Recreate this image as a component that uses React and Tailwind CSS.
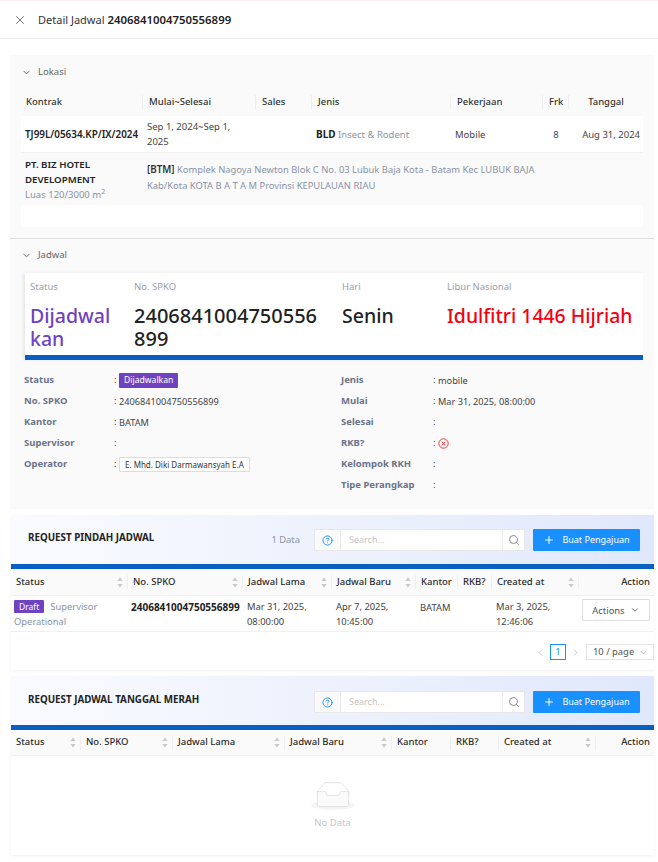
import { X, ChevronDown, ChevronLeft, ChevronRight, Search, Plus, CircleHelp } from "lucide-react";

const topCols = "grid-cols-[122px_113px_56px_139px_92px_26px_74px]";

const leftDetails = [
  { label: "Status", tag: "Dijadwalkan" },
  { label: "No. SPKO", value: "2406841004750556899" },
  { label: "Kantor", value: "BATAM" },
  { label: "Supervisor", value: "" },
  { label: "Operator", chip: "E. Mhd. Diki Darmawansyah E.A" },
];

const rightDetails = [
  { label: "Jenis", value: "mobile" },
  { label: "Mulai", value: "Mar 31, 2025, 08:00:00" },
  { label: "Selesai", value: "" },
  { label: "RKB?", rejected: true },
  { label: "Kelompok RKH", value: "" },
  { label: "Tipe Perangkap", value: "" },
];

const tableCols = [
  { label: "Status", sort: true },
  { label: "No. SPKO", sort: true },
  { label: "Jadwal Lama", sort: true },
  { label: "Jadwal Baru", sort: true },
  { label: "Kantor" },
  { label: "RKB?" },
  { label: "Created at", sort: true },
  { label: "Action", right: true },
];

function SortIcon() {
  return (
    <svg width="6" height="11" viewBox="0 0 6 11" className="shrink-0">
      <path d="M3 0.5 L5.6 4 H0.4 Z" fill="#c8c8c8" />
      <path d="M3 10.5 L5.6 7 H0.4 Z" fill="#c8c8c8" />
    </svg>
  );
}

function HeadRow({ cols, template, height }) {
  return (
    <div className={`grid ${template} ${height} items-center bg-[#fafafa] border-b border-[#f0f0f0] text-[9.5px] font-medium text-[#2b2b2b]`}>
      {cols.map((c, i) => (
        <div
          key={c.label}
          className={`flex items-center h-[14px] pl-[5px] pr-[4px] whitespace-nowrap ${i < cols.length - 1 ? "border-r border-[#efefef]" : ""} ${c.right ? "justify-end" : "justify-between"}`}
        >
          <span>{c.label}</span>
          {c.sort && <SortIcon />}
        </div>
      ))}
    </div>
  );
}

function CardHeader({ title, count, top }) {
  return (
    <>
      <div className={`flex h-[49px] items-start bg-gradient-to-r from-[#fafbff] to-[#e0e8fb] pr-[14px] pl-[17px] ${top}`}>
        <div className="whitespace-nowrap text-[9.8px] leading-[18px] font-bold text-[#222]">{title}</div>
        <div className="ml-auto flex items-center">
          {count && <span className="mr-[14px] text-[9.4px] text-[#8a94a6]">{count}</span>}
          <div className="flex h-[22px] w-[211px] border border-[#e8e8e8] bg-white">
            <div className="flex w-[26px] items-center justify-center border-r border-[#e8e8e8] bg-[#fafafa]">
              <CircleHelp size={11} className="text-[#1890ff]" />
            </div>
            <div className="flex-1 pl-[8px] text-[9px] leading-[20px] text-[#c4c4c4]">Search...</div>
            <div className="flex w-[22px] items-center justify-center border-l border-[#eeeeee]">
              <Search size={12} className="text-[#8c8c8c]" />
            </div>
          </div>
          <div className="ml-[8px] flex h-[22px] w-[107px] items-center justify-center gap-[7px] rounded-[1px] bg-[#1890ff] text-[9px] text-white">
            <Plus size={12} strokeWidth={2} />
            <span>Buat Pengajuan</span>
          </div>
        </div>
      </div>
      <div className="h-[5px] bg-[#0a60c2]" />
    </>
  );
}

function DetailRow({ item, labelWidth }) {
  return (
    <div className="flex h-[21px] items-center">
      <div className={`${labelWidth} shrink-0 text-[9.5px] font-bold text-[#6b7389]`}>{item.label}</div>
      <span className="w-[5px] shrink-0 text-[9.5px] text-[#444]">:</span>
      {item.tag && (
        <span className="rounded-[1px] bg-[#6f42c1] px-[5px] text-[8.6px] leading-[15px] text-white">{item.tag}</span>
      )}
      {item.chip && (
        <span className="rounded-[1px] border border-[#dddddd] bg-white px-[5px] text-[8px] leading-[13px] text-[#333]">{item.chip}</span>
      )}
      {item.rejected && (
        <svg width="11" height="11" viewBox="0 0 11 11" className="-mt-[1px]">
          <circle cx="5.5" cy="5.5" r="4.7" fill="none" stroke="#f0383c" />
          <path d="M3.8 3.8 L7.2 7.2 M7.2 3.8 L3.8 7.2" stroke="#f0383c" />
        </svg>
      )}
      {item.value && <span className="text-[9.2px] text-[#444]">{item.value}</span>}
    </div>
  );
}

export default function App() {
  return (
    <div className="min-h-[862px] bg-white text-[9.5px] text-[#333] font-['Noto_Sans','Open_Sans',sans-serif]">
      <div className="h-[1px] bg-[#fdeff0]" />
      <div className="flex h-[38px] items-center border-b border-[#ececec] pl-[13px]">
        <X size={14} strokeWidth={1.4} className="text-[#555]" />
        <div className="ml-[11px] text-[11px] text-[#333]">
          Detail Jadwal <span className="text-[11.4px] font-semibold text-[#222]">2406841004750556899</span>
        </div>
      </div>

      <div className="mt-[16px] mr-[4px] ml-[10px] bg-[#fafafa]">
        <div className="h-[184px] border-b border-[#dedede] pt-[10px]">
          <div className="flex h-[14px] items-center pl-[11px] text-[9.5px] text-[#666]">
            <ChevronDown size={11} className="mr-[6px]" />
            Lokasi
          </div>
          <div className="mx-[11px] mt-[9px]">
            <div className={`grid ${topCols} h-[28px] items-center font-medium text-[#333]`}>
              {["Kontrak", "Mulai~Selesai", "Sales", "Jenis", "Pekerjaan", "Frk"].map((h, i) => (
                <div key={h} className={`h-[14px] whitespace-nowrap border-r border-[#eeeeee] ${i === 0 ? "pl-[5px]" : "pl-[6px]"}`}>{h}</div>
              ))}
              <div className="h-[14px] text-center">Tanggal</div>
            </div>
            <div className={`grid ${topCols} h-[37px] items-center border-b border-[#f0f0f0] bg-white leading-[15px] text-[#444]`}>
              <div className="pl-[4px] text-[9.9px] font-semibold whitespace-nowrap text-[#222]">TJ99L/05634.KP/IX/2024</div>
              <div className="pr-[8px] pl-[4px]">Sep 1, 2024~Sep 1, 2025</div>
              <div />
              <div className="pl-[4px]"><b className="text-[10px] font-bold text-[#222]">BLD</b> <span className="text-[#8a92a6]">Insect &amp; Rodent</span></div>
              <div className="pl-[4px]">Mobile</div>
              <div className="text-center">8</div>
              <div className="pr-[3px] text-right whitespace-nowrap">Aug 31, 2024</div>
            </div>
            <div className="flex h-[52px] items-center">
              <div className="w-[122px] shrink-0 pl-[4px] leading-[15px]">
                <div className="w-[100px] text-[9.7px] font-semibold text-[#222]">PT. BIZ HOTEL DEVELOPMENT</div>
                <div className="text-[#8a92a6]">Luas 120/3000 m<sup className="text-[7px]">2</sup></div>
              </div>
              <div className="-mt-[3px] w-[410px] pl-[4px] text-[9.4px] leading-[16px] whitespace-nowrap text-[#8a92a6]">
                <div><b className="text-[9.8px] font-semibold text-[#333]">[BTM]</b> Komplek Nagoya Newton Blok C No. 03 Lubuk Baja Kota - Batam Kec LUBUK BAJA</div>
                <div>Kab/Kota KOTA B A T A M Provinsi KEPULAUAN RIAU</div>
              </div>
            </div>
            <div className="h-[22px] bg-white" />
          </div>
        </div>

        <div className="h-[270px] pt-[9px]">
          <div className="flex h-[14px] items-center pl-[11px] text-[9.5px] text-[#666]">
            <ChevronDown size={11} className="mr-[6px]" />
            Jadwal
          </div>
          <div className="mt-[11px] ml-[15px] w-[618px] bg-white shadow-[-2px_0_3px_rgba(0,0,0,0.08)]">
            <div className="grid h-[82px] grid-cols-[104px_208px_105px_196px] pt-[7px] pl-[5px]">
              {[
                { label: "Status", value: "Dijadwalkan", size: "text-[19.5px] text-[#6f42c1]" },
                { label: "No. SPKO", value: "2406841004750556899", size: "text-[20px] text-[#222]" },
                { label: "Hari", value: "Senin", size: "text-[19.5px] text-[#222]" },
                { label: "Libur Nasional", value: "Idulfitri 1446 Hijriah", size: "text-[19.4px] whitespace-nowrap text-[#f5000f]" },
              ].map((s) => (
                <div key={s.label} className="min-w-0 pr-[16px] last:pr-0">
                  <div className="text-[9.5px] leading-[14px] text-[#9aa0ac]">{s.label}</div>
                  <div className={`mt-[10px] break-all leading-[23px] font-medium ${s.size}`}>{s.value}</div>
                </div>
              ))}
            </div>
            <div className="h-[5px] bg-[#0a60c2]" />
          </div>
          <div className="mt-[10px] ml-[14px] grid grid-cols-[317px_1fr]">
            <div>
              {leftDetails.map((d) => (
                <DetailRow key={d.label} item={d} labelWidth="w-[90px]" />
              ))}
            </div>
            <div>
              {rightDetails.map((d) => (
                <DetailRow key={d.label} item={d} labelWidth="w-[92px]" />
              ))}
            </div>
          </div>
        </div>
      </div>

      <div className="mt-[6px] mr-[4px] ml-[11px] bg-white shadow-[0_1px_3px_rgba(0,0,0,0.06)]">
        <CardHeader title="REQUEST PINDAH JADWAL" count="1 Data" top="pt-[14px]" />
        <HeadRow cols={tableCols} template="grid-cols-[117px_115px_89px_84px_42px_34px_87px_75px]" height="h-[27px]" />
        <div className="grid h-[36px] grid-cols-[117px_115px_89px_84px_42px_34px_87px_75px] items-center border-b border-[#f0f0f0] pt-[1px] text-[9.4px] leading-[15px] text-[#444]">
          <div className="pl-[3px] text-[#8a92a6]">
            <div className="flex items-center gap-[6px]">
              <span className="rounded-[1px] bg-[#6f42c1] px-[5px] text-[8.5px] leading-[13px] text-white">Draft</span>
              <span>Supervisor</span>
            </div>
            <div>Operational</div>
          </div>
          <div className="self-start pt-[3px] pl-[3px] text-[10px] font-bold whitespace-nowrap text-[#222]">2406841004750556899</div>
          <div className="pl-[4px]">Mar 31, 2025, 08:00:00</div>
          <div className="pl-[4px]">Apr 7, 2025, 10:45:00</div>
          <div className="self-start pt-[3px] pl-[4px]">BATAM</div>
          <div />
          <div className="pr-[10px] pl-[4px]">Mar 3, 2025, 12:46:06</div>
          <div className="flex justify-end self-start pt-[2px] pr-[4px]">
            <div className="flex h-[22px] w-[68px] items-center justify-center gap-[5px] border border-[#dfdfdf] text-[#555]">
              Actions <ChevronDown size={10} />
            </div>
          </div>
        </div>
        <div className="flex h-[38px] items-center justify-end pt-[2px]">
          <ChevronLeft size={11} className="text-[#c8c8c8]" />
          <div className="mx-[4px] flex h-[16px] w-[16px] items-center justify-center border border-[#1890ff] text-[9.5px] text-[#1890ff]">1</div>
          <ChevronRight size={11} className="text-[#c8c8c8]" />
          <div className="ml-[5px] flex h-[16px] w-[68px] items-center justify-between border border-[#e4e4e4] pr-[4px] pl-[6px] text-[9.4px] text-[#555]">
            10 / page <ChevronDown size={11} className="text-[#bbb]" />
          </div>
        </div>
      </div>

      <div className="mt-[6px] mr-[4px] ml-[11px] bg-white shadow-[0_1px_3px_rgba(0,0,0,0.06)]">
        <CardHeader title="REQUEST JADWAL TANGGAL MERAH" top="pt-[15px]" />
        <HeadRow cols={tableCols} template="grid-cols-[70px_92px_112px_107px_59px_48px_97px_58px]" height="h-[26px]" />
        <div className="flex h-[99px] flex-col items-center pt-[26px]">
          <svg width="44" height="28" viewBox="0 0 64 41">
            <g transform="translate(0 1)" fill="none" fillRule="evenodd">
              <ellipse fill="#f5f5f5" cx="32" cy="33" rx="32" ry="7" />
              <g fillRule="nonzero" stroke="#d9d9d9">
                <path d="M55 12.76L44.854 1.258C44.367.474 43.656 0 42.907 0H21.093c-.749 0-1.46.474-1.947 1.257L9 12.761V22h46v-9.24z" />
                <path d="M41.613 15.931c0-1.605.994-2.93 2.227-2.931H55v18.137C55 33.26 53.68 35 52.05 35h-40.1C10.32 35 9 33.259 9 31.137V13h11.16c1.233 0 2.227 1.323 2.227 2.928v.022c0 1.605 1.005 2.901 2.237 2.901h14.752c1.232 0 2.237-1.308 2.237-2.913v-.007z" fill="#fafafa" />
              </g>
            </g>
          </svg>
          <div className="mt-[6px] text-[9.5px] text-[#c8c8c8]">No Data</div>
        </div>
      </div>
    </div>
  );
}
